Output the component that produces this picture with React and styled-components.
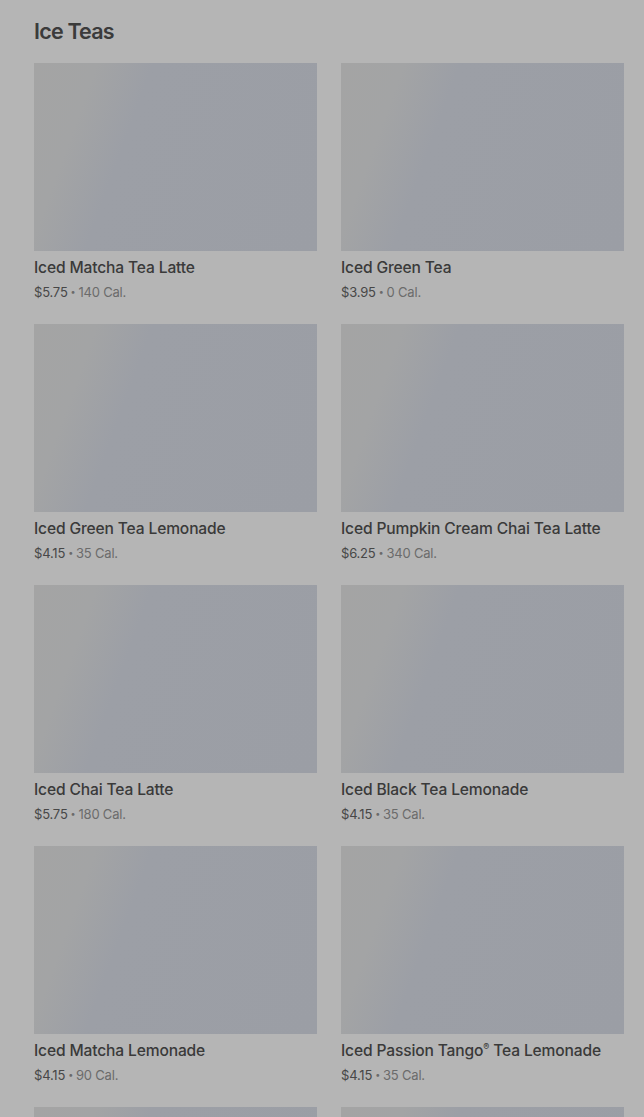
import React from "react";
import styled, { createGlobalStyle } from "styled-components";

const items = [
  { name: "Iced Matcha Tea Latte", price: "$5.75", cal: "140 Cal." },
  { name: "Iced Green Tea", price: "$3.95", cal: "0 Cal." },
  { name: "Iced Green Tea Lemonade", price: "$4.15", cal: "35 Cal." },
  { name: "Iced Pumpkin Cream Chai Tea Latte", price: "$6.25", cal: "340 Cal." },
  { name: "Iced Chai Tea Latte", price: "$5.75", cal: "180 Cal." },
  { name: "Iced Black Tea Lemonade", price: "$4.15", cal: "35 Cal." },
  { name: "Iced Matcha Lemonade", price: "$4.15", cal: "90 Cal." },
  { name: "Iced Passion Tango", reg: true, suffix: " Tea Lemonade", price: "$4.15", cal: "35 Cal." },
];

function App() {
  return (
    <>
      <GlobalStyle />
      <Page>
        <Heading>Ice Teas</Heading>
        <Grid>
          {items.map((item) => (
            <Card key={item.name + (item.suffix || "")}>
              <Thumb />
              <Name>
                {item.name}
                {item.reg && <sup>®</sup>}
                {item.suffix}
              </Name>
              <Meta>
                <Price>{item.price}</Price>
                <Dot>•</Dot>
                <Cal>{item.cal}</Cal>
              </Meta>
            </Card>
          ))}
          {/* next row still loading */}
          <Card>
            <Thumb />
          </Card>
          <Card>
            <Thumb />
          </Card>
        </Grid>
      </Page>
    </>
  );
}

export default App;

const GlobalStyle = createGlobalStyle`
  html, body {
    margin: 0;
    background: #b5b5b5;
    font-family: Inter, "Noto Sans", sans-serif;
  }
`;

const Page = styled.div`
  padding: 16px 20px 0 34px;
  height: 1117px;
  overflow: hidden;
  box-sizing: border-box;
`;

const Heading = styled.h2`
  margin: 0 0 17px;
  font-size: 21.5px;
  line-height: 30px;
  font-weight: 600;
  letter-spacing: -0.8px;
  color: #3b3b3b;
`;

const Grid = styled.div`
  display: grid;
  grid-template-columns: 283px 283px;
  column-gap: 24px;
  row-gap: 22px;
`;

const Card = styled.div`
  display: flex;
  flex-direction: column;
`;

const Thumb = styled.div`
  height: 188px;
  background: linear-gradient(
    110deg,
    #a4a4a4 0%,
    #a3a4a5 18%,
    #9c9fa6 34%,
    #9b9ea5 100%
  );
`;

const Name = styled.div`
  margin-top: 7px;
  font-size: 15.6px;
  line-height: 20px;
  font-weight: 500;
  color: #3a3a3a;
  letter-spacing: -0.15px;

  sup {
    font-size: 9px;
    vertical-align: 6px;
    line-height: 0;
  }
`;

const Meta = styled.div`
  margin-top: 4px;
  display: flex;
  align-items: center;
  gap: 3px;
  font-size: 13px;
  line-height: 20px;
  letter-spacing: -0.2px;
`;

const Price = styled.span`
  color: #474747;
`;

const Dot = styled.span`
  color: #6a6a6a;
  font-size: 9px;
`;

const Cal = styled.span`
  color: #6b6b6b;
`;
